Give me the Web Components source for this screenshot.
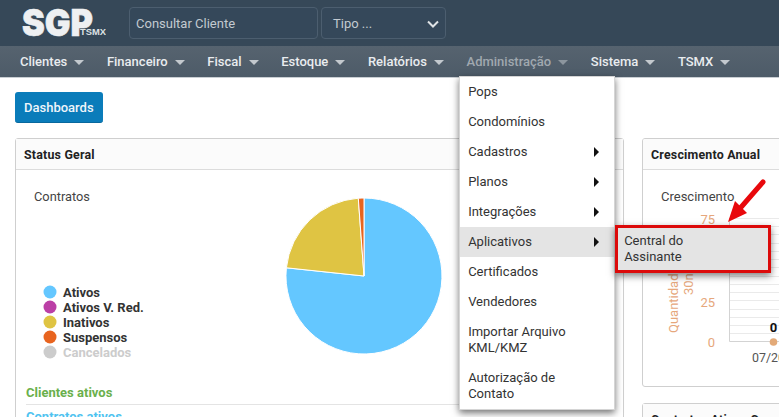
<!DOCTYPE html>
<html lang="pt-BR">
<head>
<meta charset="utf-8">
<title>SGP</title>
<style>
html,body{margin:0;padding:0;height:417px;overflow:hidden;background:#fff;font-family:Roboto,"Liberation Sans",sans-serif}
</style>
</head>
<body>
<sg-topbar></sg-topbar>
<sg-nav>
  <sg-nav-item label="Clientes"></sg-nav-item>
  <sg-nav-item label="Financeiro"></sg-nav-item>
  <sg-nav-item label="Fiscal"></sg-nav-item>
  <sg-nav-item label="Estoque"></sg-nav-item>
  <sg-nav-item label="Relatórios"></sg-nav-item>
  <sg-nav-item label="Administração" dim>
    <sg-menu>
      <sg-menu-item>Pops</sg-menu-item>
      <sg-menu-item>Condomínios</sg-menu-item>
      <sg-menu-item more>Cadastros</sg-menu-item>
      <sg-menu-item more>Planos</sg-menu-item>
      <sg-menu-item more>Integrações</sg-menu-item>
      <sg-menu-item more active>Aplicativos
        <sg-submenu slot="sub">Central do Assinante</sg-submenu>
      </sg-menu-item>
      <sg-menu-item>Certificados</sg-menu-item>
      <sg-menu-item>Vendedores</sg-menu-item>
      <sg-menu-item>Importar Arquivo KML/KMZ</sg-menu-item>
      <sg-menu-item>Autorização de Contato</sg-menu-item>
    </sg-menu>
  </sg-nav-item>
  <sg-nav-item label="Sistema"></sg-nav-item>
  <sg-nav-item label="TSMX"></sg-nav-item>
</sg-nav>
<sg-dashboard>
  <sg-button slot="actions">Dashboards</sg-button>
  <sg-card slot="left" title="Status Geral">
    <sg-status-chart></sg-status-chart>
    <sg-stat color="#6ab04c">Clientes ativos</sg-stat>
    <sg-stat color="#4fc3f0">Contratos ativos</sg-stat>
  </sg-card>
  <sg-card slot="right" title="Crescimento Anual" fixed>
    <sg-growth-chart></sg-growth-chart>
  </sg-card>
  <sg-card slot="right" title="Contratos Ativos C"></sg-card>
</sg-dashboard>
<sg-callout></sg-callout>

<script>
function def(name, css, html, extra){
  class E extends HTMLElement{
    constructor(){super();const s=this.attachShadow({mode:'open'});s.innerHTML='<style>'+css+'</style>'+(typeof html==='function'?html(this):html);}
    connectedCallback(){
      const s=this.shadowRoot;
      s.querySelectorAll('[data-attr]').forEach(n=>{n.textContent=this.getAttribute(n.dataset.attr)||''});
      if(extra)extra(this);
    }
  }
  customElements.define(name,E);
}

def('sg-topbar',`
:host{display:flex;align-items:center;height:46px;background:#364858;box-sizing:border-box;padding:0 0 0 20px}
.mark{display:block;margin-right:23px;flex:none}
.logo{font:900 37px Inter,"DejaVu Sans",sans-serif;fill:#eef0f2;stroke:#eef0f2;stroke-width:.6px}
.tsmx{font:700 8.500px "Liberation Sans",sans-serif;fill:#dfe3e6}
.field{box-sizing:border-box;height:32px;border:1px solid #4c5e6f;border-radius:4px;background:#35485a;color:#c3cad0;font-size:13px;display:flex;align-items:center;padding:0 6px}
.in{width:189px;margin-right:3px}
.sel{width:125px;position:relative;padding-left:11px}
.sel svg{position:absolute;right:4px;top:10px}
`,`
<svg class="mark" width="86" height="46" viewBox="0 0 86 46" role="img" aria-label="SGP TSMX">
  <text class="logo" x="2" y="36" textLength="71" lengthAdjust="spacingAndGlyphs">SGP</text>
  <text class="tsmx" x="60" y="35" textLength="26" lengthAdjust="spacingAndGlyphs">TSMX</text>
</svg>
<div class="field in">Consultar Cliente</div>
<div class="field sel">Tipo ...<svg width="16" height="12" viewBox="0 0 16 12"><path d="M3 3.500 8 8.500 13 3.500" fill="none" stroke="#dfe3e6" stroke-width="2"/></svg></div>
`);

def('sg-nav',`
:host{display:flex;height:32px;box-sizing:border-box;padding-left:20px;background:linear-gradient(#56636f,#4d5b68);border-bottom:1px solid #c9ced3;align-items:center;position:relative}
`,`<slot></slot>`);

def('sg-nav-item',`
:host{display:flex;align-items:center;position:relative;color:#e9ecef;font-size:13px;font-weight:500;height:100%;margin-right:22.600px}
:host([dim]){color:#a0a8af}
i{display:block;width:0;height:0;border:5px solid transparent;border-top-color:currentColor;border-bottom:0;margin-left:7px;opacity:.75;margin-top:1px}
`,`<span data-attr="label"></span><i></i><slot></slot>`);

def('sg-menu',`
:host{display:block;position:absolute;left:-7.400px;top:30px;width:156px;box-sizing:border-box;background:#fff;border:1px solid #d5d5d5;box-shadow:0 3px 7px rgba(0,0,0,.55);z-index:10;color:#333;font-weight:400}
`,`<slot></slot>`);

def('sg-menu-item',`
:host{display:block;position:relative;padding:7px 30px 7px 8px;font-size:13px;line-height:16px;color:#333}
:host([active]){background:#e4e4e4}
i{display:none;position:absolute;right:15px;top:10px;width:0;height:0;border:5px solid transparent;border-left-color:#111;border-right:0}
:host([more]) i{display:block}
`,`<slot></slot><i></i><slot name="sub"></slot>`);

def('sg-submenu',`
:host{display:block;position:absolute;left:155px;top:-2px;width:156px;height:48px;box-sizing:border-box;background:#e4e4e4;border:3px solid #dc0a0a;padding:5px 40px 0 6px;font-size:13px;line-height:16px;color:#333;box-shadow:0 3px 7px rgba(0,0,0,.5);z-index:11}
`,`<slot></slot>`);

def('sg-dashboard',`
:host{display:block;padding:14px 0 0 15px;width:1100px}
.act{height:31px;margin-bottom:15px}
.cols{display:grid;grid-template-columns:609px 400px;column-gap:18px;align-items:start}
.col{display:flex;flex-direction:column;gap:16px}
`,`<div class="act"><slot name="actions"></slot></div>
<div class="cols"><div class="col"><slot name="left"></slot></div><div class="col"><slot name="right"></slot></div></div>`);

def('sg-button',`
:host{display:inline-flex;align-items:center;box-sizing:border-box;height:31px;padding:0 9px;background:#0a7cba;border-radius:3px;color:#eef5fa;font-size:13px;font-weight:500;border-bottom:1px solid #08689d}
`,`<slot></slot>`);

def('sg-card',`
:host{display:block;border:1px solid #cfcfcf;border-radius:3px;box-sizing:border-box;background:#fff}
:host([fixed]){height:249px;overflow:hidden}
header{height:31px;box-sizing:border-box;background:#fbfbfb;border-bottom:1px solid #dcdcdc;padding:0 8px;display:flex;align-items:center;font-size:12.400px;font-weight:700;color:#222;letter-spacing:.2px}
`,`<header data-attr="title"></header><slot></slot>`);

def('sg-stat',`
:host{display:block;height:24px;box-sizing:border-box;margin:0 10px;padding-top:4px;border-bottom:1px solid #e4e4e4;font-size:13px;font-weight:700;line-height:16px}
`,`<slot></slot>`,el=>{el.style.color=el.getAttribute('color')});

def('sg-status-chart',`
:host{display:block;height:211px}
svg{display:block}
text{font-family:Roboto,"Liberation Sans",sans-serif}
.t{font-size:12.800px;fill:#444}
.l{font-size:13px;font-weight:700;fill:#333}
`,`<svg width="607" height="211" viewBox="0 0 607 211">
<text class="t" x="18" y="31">Contratos</text>
<g transform="translate(348,106)" stroke="#fff" stroke-width="1">
<path d="M0 0V-78A78 78 0 1 1 -77.600 -8.200Z" fill="#64c7ff"/>
<path d="M0 0L-77.600 -8.200A78 78 0 0 1 -5.700 -77.800Z" fill="#dfc443"/>
<path d="M0 0L-5.700 -77.800A78 78 0 0 1 0 -78Z" fill="#e8641f"/>
</g>
<g>
<circle cx="34" cy="122" r="6.500" fill="#64c7ff"/><text class="l" x="47" y="127">Ativos</text>
<circle cx="34" cy="137" r="6.500" fill="#bb3fa6"/><text class="l" x="47" y="142">Ativos V. Red.</text>
<circle cx="34" cy="152" r="6.500" fill="#dfc443"/><text class="l" x="47" y="157">Inativos</text>
<circle cx="34" cy="167" r="6.500" fill="#e8641f"/><text class="l" x="47" y="172">Suspensos</text>
<circle cx="34" cy="182" r="6.500" fill="#cccccc"/><text class="l" x="47" y="187" style="fill:#cccccc">Cancelados</text>
</g>
</svg>`);

def('sg-growth-chart',`
:host{display:block;height:216px}
svg{display:block}
text{font-family:Roboto,"Liberation Sans",sans-serif}
.t{font-size:13px;fill:#444}
.y{font-size:13px;fill:#e6a77c;text-anchor:end}
.r{font-size:13px;fill:#e6a77c}
.g{stroke:#eaeaea;stroke-width:1}
`,`<svg width="136" height="216" viewBox="0 0 136 216">
<text class="t" x="18" y="31">Crescimento</text>
<text class="y" x="72" y="54">75</text>
<text class="y" x="72" y="137">25</text>
<text class="y" x="72" y="177">0</text>
<text class="r" transform="translate(35,163) rotate(-90)">Quantidad</text>
<text class="r" transform="translate(50,125) rotate(-90)">30n</text>
<path class="g" d="M86 48.500H136M86 56.500H136M86 64.500H136M86 73.500H136M86 81.500H136M86 89.500H136M86 97.500H136M86 106.500H136M86 114.500H136M86 122.500H136M86 130.500H136M86 139.500H136M86 147.500H136M86 155.500H136M86 163.500H136"/>
<path d="M86.500 48V171.500H136" fill="none" stroke="#d3d3d3"/>
<circle cx="130.500" cy="172" r="3.800" fill="#e3aa78"/>
<text x="130.500" y="162" text-anchor="middle" style="font-size:13px;font-weight:700;fill:#111">0</text>
<text x="109" y="192" style="font-size:12.400px;fill:#555">07/20</text>
</svg>`);

def('sg-callout',`
:host{display:block;position:absolute;left:725px;top:176px;width:44px;height:50px;z-index:20}
svg{display:block}
`,`<svg width="44" height="50" viewBox="0 0 44 50"><path d="M38 6 14.500 33" stroke="#e8080c" stroke-width="5" stroke-linecap="round" fill="none"/><path d="M3 46 10 25 22 37Z" fill="#e8080c"/></svg>`);
</script>
</body>
</html>
